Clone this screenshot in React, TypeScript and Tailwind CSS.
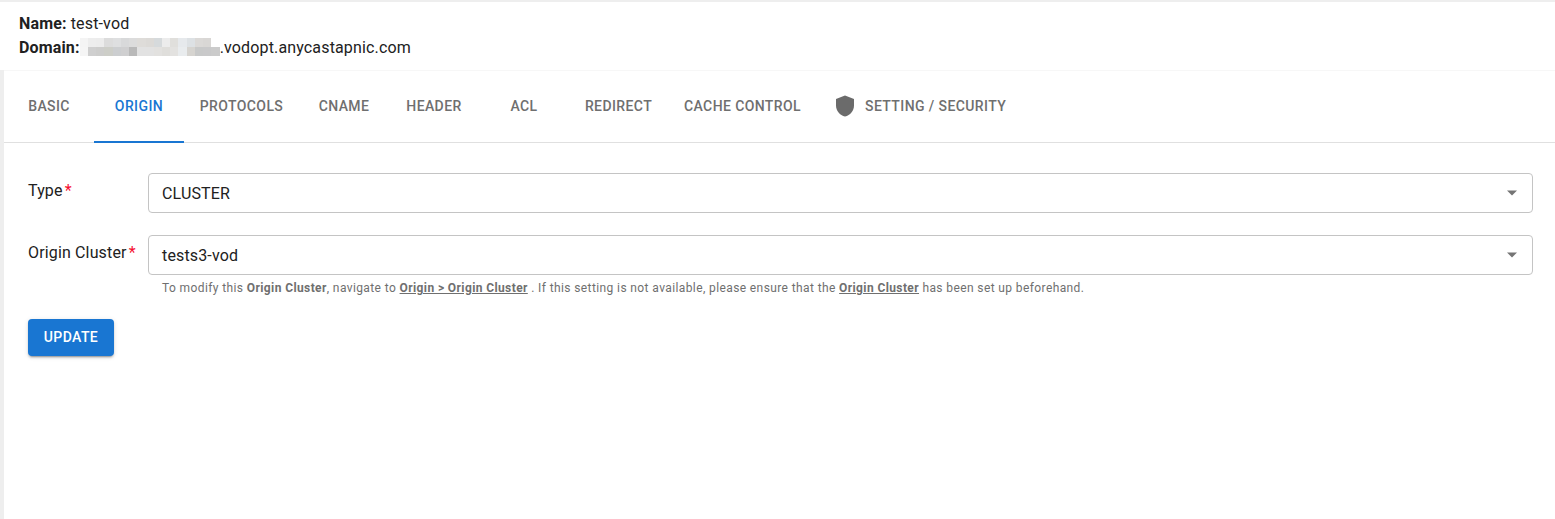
const tabs = [
  { label: "BASIC", w: "w-[90px]" },
  { label: "ORIGIN", w: "w-[90px]", active: true },
  { label: "PROTOCOLS", w: "w-[115px]" },
  { label: "CNAME", w: "w-[90px]" },
  { label: "HEADER", w: "w-[90px]" },
  { label: "ACL", w: "w-[90px]" },
  { label: "REDIRECT", w: "w-[99px]" },
  { label: "CACHE CONTROL", w: "w-[149px]" },
];

// blurred part of the domain, two rows of blocks
const mosaicTop = ["#f4f4f4", "#ededed", "#ececec", "#dcdcdc", "#dedfe0", "#d8d9da", "#dcdcdc", "#dedcd9", "#dcdad7", "#d6dadc", "#ececec", "#e0dfdc", "#e6e9ec", "#dde1e4", "#dbd9d7", "#d9d7d5", "#ffffff"];
const mosaicBottom = ["#f5f5f5", "#cfcfcf", "#cdcdcc", "#cdcec8", "#ccced0", "#cfcfd0", "#b9b9b9", "#e2e2e2", "#e2e2e2", "#e2e1df", "#dfdedb", "#e3e2e0", "#e9ecee", "#d6d4d0", "#c8c9c9", "#c9c9ca", "#cbcbcb"];

function Mosaic() {
  return (
    <span className="inline-flex flex-col align-top mt-[2px] w-[140px]">
      <span className="flex h-[9px]">
        {mosaicTop.map((c, i) => (
          <span key={i} className="flex-1" style={{ backgroundColor: c }} />
        ))}
      </span>
      <span className="flex h-[9px]">
        {mosaicBottom.map((c, i) => (
          <span key={i} className="flex-1" style={{ backgroundColor: c }} />
        ))}
      </span>
    </span>
  );
}

function SelectBox({ value }: { value: string }) {
  return (
    <div className="flex h-10 items-center justify-between rounded border border-[#c4c4c4] pl-[13px] pr-[14px] text-base tracking-[0.15px] text-[#212121]">
      <span className="pt-[2px]">{value}</span>
      <svg width="12" height="6" viewBox="0 0 12 6">
        <path d="M1 0.5h10L6 5.5z" fill="#757575" />
      </svg>
    </div>
  );
}

function Label({ text }: { text: string }) {
  return (
    <div className="w-[120px] shrink-0 pt-[6px] text-base leading-6 tracking-[0.15px] text-[#212121]">
      {text}
      <span className="ml-[2px] text-[#f50f2f]">*</span>
    </div>
  );
}

export default function App() {
  return (
    <div className="h-[519px] overflow-hidden bg-[#eeeeee] pl-1 pt-[2px] font-['Roboto',sans-serif]">
      <div className="h-full bg-white">
        <div className="h-[68px] -ml-1 bg-white pl-[19px] pt-[10px] text-base leading-6 tracking-[0.15px] text-[#212121]">
          <div>
            <b className="font-bold">Name:</b> test-vod
          </div>
          <div>
            <b className="font-bold">Domain:</b>
            <Mosaic />
            .vodopt.anycastapnic.com
          </div>
        </div>

        <div className="flex h-[73px] border-t border-b border-t-[#f7f7f7] border-b-[#e0e0e0]">
          {tabs.map((t) => (
            <div
              key={t.label}
              className={`flex h-[72px] items-center justify-center border-b-2 pb-[1px] text-sm font-medium tracking-[0.4px] ${t.w} ${
                t.active ? "border-[#1976d2] text-[#1976d2]" : "border-transparent text-[#6f6f6f]"
              }`}
            >
              {t.label}
            </div>
          ))}
          <div className="flex h-[70px] items-center gap-[10px] pl-[18px] text-sm font-medium tracking-[0.4px] text-[#6f6f6f]">
            <svg width="20" height="22" viewBox="0 0 20 22">
              <path d="M10 0.5 1 4v6.500c0 5.300 3.800 9.900 9 11 5.200-1.100 9-5.700 9-11V4z" fill="#6b6b6b" />
            </svg>
            SETTING / SECURITY
          </div>
        </div>

        <div className="pl-6 pr-[22px] pt-[30px]">
          <div className="flex">
            <Label text="Type" />
            <div className="flex-1">
              <SelectBox value="CLUSTER" />
            </div>
          </div>
          <div className="mt-[22px] flex">
            <Label text="Origin Cluster" />
            <div className="flex-1">
              <SelectBox value="tests3-vod" />
              <p className="mt-[5px] pl-[14px] text-xs leading-[17px] tracking-[0.393px] text-[#6f6f6f]">
                To modify this <b className="font-bold">Origin Cluster</b>, navigate to{" "}
                <b className="font-bold underline">Origin &gt; Origin Cluster</b> . If this setting is not available, please ensure that the{" "}
                <b className="font-bold underline">Origin Cluster</b> has been set up beforehand.
              </p>
            </div>
          </div>
          <button className="mt-[22px] flex h-[37px] w-[86px] items-center justify-center rounded bg-[#1976d2] pb-[2px] text-sm font-medium tracking-[0.4px] text-white shadow-[0_3px_1px_-2px_rgba(0,0,0,0.2),0_2px_2px_0_rgba(0,0,0,0.14),0_1px_5px_0_rgba(0,0,0,0.12)]">
            UPDATE
          </button>
        </div>
      </div>
    </div>
  );
}
